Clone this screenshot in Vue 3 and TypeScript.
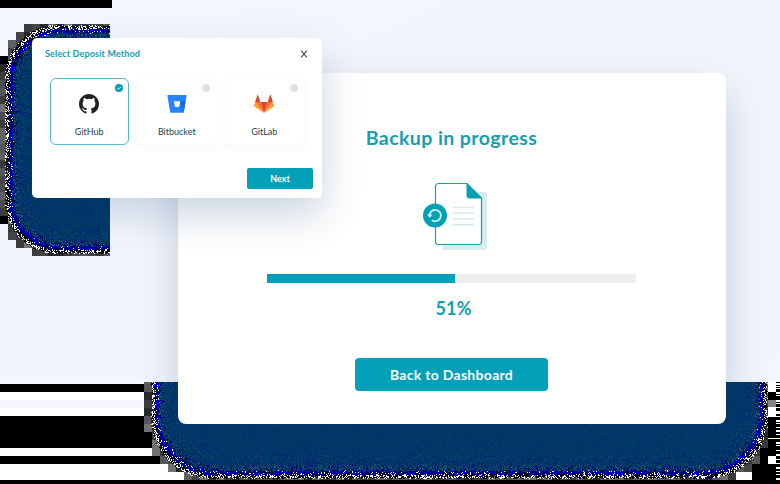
<script setup lang="ts">
interface Band { x: number; y: number; w: number; h: number; fill: string }
interface Glow { l: number; t: number; r: number; b: number; radius: number; clip: [number, number, number, number] }
interface Provider { id: string; name: string; selected: boolean }

const progress = 51
const providers: Provider[] = [
  { id: 'github', name: 'GitHub', selected: true },
  { id: 'bitbucket', name: 'Bitbucket', selected: false },
  { id: 'gitlab', name: 'GitLab', selected: false },
]

// Small seeded generator, so the grain is the same on every load.
let seed = 90210
function rand(): number {
  seed = (seed * 1664525 + 1013904223) >>> 0
  return seed / 4294967296
}

const band = (x: number, y: number, w: number, h: number, fill: string): Band => ({ x, y, w, h, fill })

const bands: Band[] = [
  band(0, 0, 112, 8, '#000'),
  band(0, 382, 152, 2, '#f0fbff'),
  band(0, 384, 152, 100, '#fff'),
  band(0, 384, 144, 8, '#000'),
  band(0, 400, 144, 8, '#f5f5ff'),
  band(0, 416, 152, 32, '#000'),
  band(0, 456, 160, 8, '#000'),
  band(152, 464, 600, 20, '#fff'),
  band(0, 480, 780, 4, '#000'),
  band(752, 382, 28, 102, '#000'),
  band(768, 382, 8, 10, '#fff'),
  band(768, 400, 8, 7, '#858585'),
  band(768, 407, 8, 10, '#fff'),
  band(768, 438, 8, 1, '#ffffb0'),
  band(768, 456, 8, 8, '#fff'),
]
const ticks = [383, 386, 388, 392, 393, 395, 400, 403, 407, 411, 413, 416, 420, 423, 427, 430, 434, 438, 442, 445, 450, 454, 459, 463, 467, 471, 474, 478]
ticks.forEach((y, i) => bands.push(band(776, y, 4, i % 3 === 0 ? 2 : 1, y === 438 ? '#ffffb0' : '#fff')))

const greys = ['#4b4c4e', '#3b3c3e', '#28292b', '#55575a', '#707174', '#444548', '#3a3b3d', '#606164']
const glows: Glow[] = [
  { l: 5, t: 25, r: 260, b: 254, radius: 52, clip: [0, 24, 110, 256] },
  { l: 151, t: 250, r: 768, b: 479, radius: 61, clip: [144, 382, 768, 480] },
]

// Depth of a pixel inside a rounded rectangle; negative when outside.
function depth(g: Glow, x: number, y: number): number {
  const cx = (g.l + g.r) / 2
  const cy = (g.t + g.b) / 2
  const qx = Math.abs(x - cx) - (g.r - g.l) / 2 + g.radius
  const qy = Math.abs(y - cy) - (g.b - g.t) / 2 + g.radius
  const out = Math.hypot(Math.max(qx, 0), Math.max(qy, 0))
  return g.radius - out - Math.min(Math.max(qx, qy), 0)
}

const layers: Record<string, string> = {}
function dot(color: string, x: number, y: number, w = 1): void {
  layers[color] = (layers[color] ?? '') + `M${x} ${y}h${w}v1h-${w}z`
}
function pick(list: string[]): string {
  return list[Math.floor(rand() * list.length)]
}

for (const g of glows) {
  const [x0, y0, x1, y1] = g.clip
  for (let by = Math.floor(y0 / 8) * 8; by < y1; by += 8) {
    for (let bx = Math.floor(x0 / 8) * 8; bx < x1; bx += 8) {
      const corners = [depth(g, bx, by), depth(g, bx + 8, by), depth(g, bx, by + 8), depth(g, bx + 8, by + 8)]
      if (Math.max(...corners) > 0.5 && Math.min(...corners) < 4) {
        // The far left column only runs beside the straight part of the edge.
        if (bx === 0 && (by < 56 || by > 216)) continue
        const top = Math.max(by, y0)
        const left = Math.max(bx, x0)
        const fill = bx === 0 && (by === 56 || by === 216) ? '#000' : pick(greys)
        bands.push(band(left, top, Math.min(bx + 8, x1) - left, Math.min(by + 8, y1) - top, fill))
      }
    }
  }
  for (let y = y0; y < y1; y++) {
    let start = -1
    for (let x = x0; x <= x1; x++) {
      const inside = x < x1 && depth(g, x + 0.5, y + 0.5) > 5
      if (inside && start < 0) start = x
      if (!inside && start >= 0) {
        dot('#003566', start, y, x - start)
        start = -1
      }
    }
  }
  for (let y = y0; y < y1; y++) {
    for (let x = x0; x < x1; x++) {
      if ((x > 34 && x < 320 && y > 40 && y < 196) || (x > 180 && x < 724 && y < 422)) continue
      const ox = Math.max(g.l + g.radius - x, x - g.r + g.radius, 0)
      const oy = Math.max(g.t + g.radius - y, y - g.b + g.radius, 0)
      // The rim thickens where the corner turns.
      const turn = Math.min(ox, oy) / g.radius
      const d = (depth(g, x + 0.5, y + 0.5) + (rand() - 0.5) * 2) / (1 + turn * 0.5)
      const r = rand()
      if (d < 0.5) continue
      if (d < 4) {
        if (r < 0.36) dot('#ffffff', x, y)
        else if (r < 0.88) dot('#000000', x, y)
      } else if (d < 8) {
        if (r < 0.08) dot('#ffffff', x, y)
        else if (r < 0.27) dot('#000000', x, y)
        else if (r < 0.8) dot('#0000cc', x, y)
        else dot('#000078', x, y)
      } else if (d < 13) {
        if (r < 0.22) dot('#000078', x, y)
        else if (r < 0.36) dot('#001b3c', x, y)
        else if (r < 0.66) dot('#005264', x, y)
        else if (r < 0.73) dot('#25658b', x, y)
      } else if (d < 24) {
        if (r < 0.17) dot('#00246b', x, y)
        else if (r < 0.42) dot('#004868', x, y)
        else if (r < 0.52) dot('#002d7b', x, y)
      } else if (r < 0.2) dot('#003f66', x, y)
      else if (r < 0.34) dot('#003073', x, y)
    }
  }
}
</script>

<template>
  <main class="scene">
    <svg class="backdrop" viewBox="0 0 780 484" shape-rendering="crispEdges" aria-hidden="true">
      <rect v-for="(b, i) in bands" :key="i" :x="b.x" :y="b.y" :width="b.w" :height="b.h" :fill="b.fill" />
      <path v-for="(d, color) in layers" :key="color" :d="d" :fill="color" />
    </svg>

    <div class="shade shade-card"><span></span></div>

    <section class="card">
      <h1>Backup in progress</h1>
      <svg class="document" width="68" height="70" viewBox="0 0 68 70" fill="none">
        <path d="M20 11h43a2 2 0 0 1 2 2v54a2 2 0 0 1-2 2H22a2 2 0 0 1-2-2z" fill="#d6ecef" />
        <path d="M16.5 2.5H45L59.500 17V60.500a3 3 0 0 1-3 3h-40a3 3 0 0 1-3-3v-55a3 3 0 0 1 3-3z" fill="#fff" stroke="#159eb0" stroke-width="1.200" />
        <path d="M44.500 2.200 60 17.500H48a3.500 3.500 0 0 1-3.500-3.500z" fill="#05a0b4" />
        <path d="M30.500 26.500h21.500M30.500 32.200h21.500M30.500 37.900h21.500M30.500 43.600h21.500" stroke="#d6ecef" stroke-width="1.700" />
        <circle cx="13" cy="34.500" r="12" fill="#05a0b4" />
        <path d="M7.500 34.500a5.700 5.700 0 1 1 2.300 4.600" stroke="#d9fbff" stroke-width="1.700" />
        <path d="M5 33.500h5.400l-2.600 3.600z" fill="#d9fbff" />
      </svg>
      <div class="track"><div class="fill" :style="{ width: progress + '%' }"></div></div>
      <p class="percent">{{ progress }}%</p>
      <button class="dashboard" type="button">Back to Dashboard</button>
      <div class="dialog-shade"></div>
    </section>

    <section class="dialog">
      <header>
        <h2>Select Deposit Method</h2>
        <svg width="8" height="8" viewBox="0 0 8 8"><path d="M1.300.7 6.700 7.300M6.700.7 1.300 7.300" stroke="#444b50" stroke-width="1.100" /></svg>
      </header>
      <div class="providers">
        <div v-for="p in providers" :key="p.id" class="provider" :class="{ selected: p.selected }">
          <span class="radio">
            <svg v-if="p.selected" width="8" height="8" viewBox="0 0 8 8"><path d="M2.200 4.100 3.500 5.300 5.900 2.900" fill="none" stroke="#fff" stroke-width=".9" /></svg>
          </span>
          <svg v-if="p.id === 'github'" class="logo" width="20" height="20" viewBox="0 0 16 16">
            <path fill="#202225" d="M8 0C3.580 0 0 3.580 0 8c0 3.540 2.290 6.530 5.470 7.590.4.070.55-.17.55-.38 0-.19-.01-.82-.01-1.490-2.010.37-2.530-.49-2.690-.94-.09-.23-.48-.94-.82-1.130-.28-.15-.68-.52-.01-.53.63-.01 1.080.58 1.230.82.72 1.210 1.870.87 2.330.66.07-.52.28-.87.51-1.070-1.780-.2-3.640-.89-3.640-3.950 0-.87.31-1.590.82-2.150-.08-.2-.36-1.020.08-2.120 0 0 .67-.21 2.200.82a7.600 7.600 0 0 1 4 0c1.530-1.040 2.200-.82 2.200-.82.44 1.100.16 1.920.08 2.120.51.56.82 1.270.82 2.150 0 3.070-1.870 3.750-3.650 3.950.29.25.54.73.54 1.480 0 1.070-.01 1.930-.01 2.200 0 .21.15.46.55.38A8 8 0 0 0 16 8c0-4.420-3.580-8-8-8z" />
          </svg>
          <svg v-else-if="p.id === 'bitbucket'" class="logo" width="20" height="20" viewBox="0 0 20 20">
            <defs>
              <linearGradient id="bucket-fold" x1="18" y1="6" x2="10" y2="14" gradientUnits="userSpaceOnUse">
                <stop offset="0" stop-color="#0b5cd6" /><stop offset="1" stop-color="#2684ff" />
              </linearGradient>
            </defs>
            <path d="M.8 1h18.400q.5 0 .4.600L16.900 17.900q-.1.500-.6.500H3.700q-.5 0-.6-.5L.4 1.600Q.3 1 .8 1z" fill="#2684ff" />
            <path d="M18.500 7.300H13L12 12.800H8L3.300 18.300q.2.100.4.100h12.600q.5 0 .6-.5z" fill="url(#bucket-fold)" />
            <path d="M7 7.300h6.200L12.200 12.900H8z" fill="#fff" />
          </svg>
          <svg v-else class="logo" width="20" height="20" viewBox="0 0 20 20">
            <path d="M10 19 13.700 8H6.300z" fill="#e24329" />
            <path d="M10 19 6.300 8H1.100z" fill="#fc6d26" />
            <path d="M1.100 8 0 11.300q-.1.600.4 1.100L10 19z" fill="#fca326" />
            <path d="M1.100 8h5.200L4 1.100q-.3-.6-.6 0z" fill="#e24329" />
            <path d="M10 19 13.700 8h5.200z" fill="#fc6d26" />
            <path d="M18.900 8 20 11.300q.1.600-.4 1.100L10 19z" fill="#fca326" />
            <path d="M18.900 8h-5.200L16 1.100q.3-.6.600 0z" fill="#e24329" />
          </svg>
          <span class="name">{{ p.name }}</span>
        </div>
      </div>
      <footer><button class="next" type="button">Next</button></footer>
    </section>
  </main>
</template>

<style>
body { margin: 0; }
</style>

<style scoped>
.scene {
  position: relative;
  width: 780px;
  height: 484px;
  overflow: hidden;
  background: linear-gradient(155deg, #f3f6fd 0%, #f2f5fc 80%, #f2f9ff 100%);
  font-family: Lato, "Liberation Sans", sans-serif;
}
.backdrop { position: absolute; inset: 0; width: 780px; height: 484px; }
h1, h2, p { margin: 0; }
button { border: 0; padding: 0; color: #fff; background: #03a0b7; font-family: inherit; font-weight: 700; }

.shade-card { position: absolute; left: 110px; top: 0; width: 670px; height: 382px; overflow: hidden; }
.shade-card::before, .shade-card span { content: ""; position: absolute; border-radius: 8px; }
.shade-card::before { left: 68px; top: 73px; width: 548px; height: 351px; box-shadow: 0 18px 44px rgba(0, 53, 102, .2); }
.shade-card span { left: -78px; top: 38px; width: 290px; height: 160px; box-shadow: 0 16px 40px rgba(0, 53, 102, .18); }

.card {
  position: absolute;
  left: 178px;
  top: 73px;
  box-sizing: border-box;
  width: 548px;
  height: 351px;
  padding-right: 1px;
  display: flex;
  flex-direction: column;
  align-items: center;
  overflow: hidden;
  border-radius: 8px;
  background: #fff;
}
h1 { margin-top: 53px; color: #159eb0; font-size: 19.500px; line-height: 24px; font-weight: 700; letter-spacing: .42px; white-space: nowrap; }
.document { margin: 31px 0 0 9px; }
.track { width: 369px; height: 9px; margin-top: 23px; background: #eee; }
.fill { height: 100%; background: #03a0b7; }
.percent { margin: 13px 0 0 4px; color: #159eb0; font-size: 18px; line-height: 24px; font-weight: 700; letter-spacing: .2px; }
.dashboard { width: 193px; height: 33px; margin-top: 38px; border-radius: 4px; font-size: 14px; line-height: 31px; letter-spacing: .3px; }
.dialog-shade { position: absolute; left: -146px; top: -35px; width: 290px; height: 160px; border-radius: 6px; box-shadow: 0 16px 40px rgba(0, 53, 102, .22); }

.dialog {
  position: absolute;
  left: 32px;
  top: 38px;
  box-sizing: border-box;
  width: 290px;
  height: 160px;
  padding: 9px 9px 9px 13px;
  border-radius: 5px;
  background: #fff;
}
header { display: flex; align-items: center; justify-content: space-between; padding-right: 5px; height: 13px; }
h2 { color: #159eb0; font-size: 9px; line-height: 13px; font-weight: 700; letter-spacing: .14px; white-space: nowrap; }
.providers { display: flex; gap: 9px; margin: 18px 0 0 5px; }
.provider {
  position: relative;
  box-sizing: border-box;
  display: flex;
  flex-direction: column;
  align-items: center;
  width: 78.500px;
  height: 67px;
  padding-top: 15px;
  border: 1px solid transparent;
  border-radius: 6px;
  background: #fff;
  box-shadow: 0 2px 8px rgba(0, 53, 102, .05);
}
.provider.selected { border-color: #55bac8; }
.radio { position: absolute; top: 5px; right: 5px; width: 8px; height: 8px; border-radius: 50%; background: #dae2e3; }
.selected .radio { background: #03a0b7; }
.radio svg { display: block; }
.name { margin-top: 12px; color: #123f52; font-size: 9px; line-height: 12px; }
footer { display: flex; justify-content: flex-end; margin-top: 23px; }
.next { width: 66px; height: 21px; border-radius: 2px; font-size: 9px; line-height: 21px; }
</style>
